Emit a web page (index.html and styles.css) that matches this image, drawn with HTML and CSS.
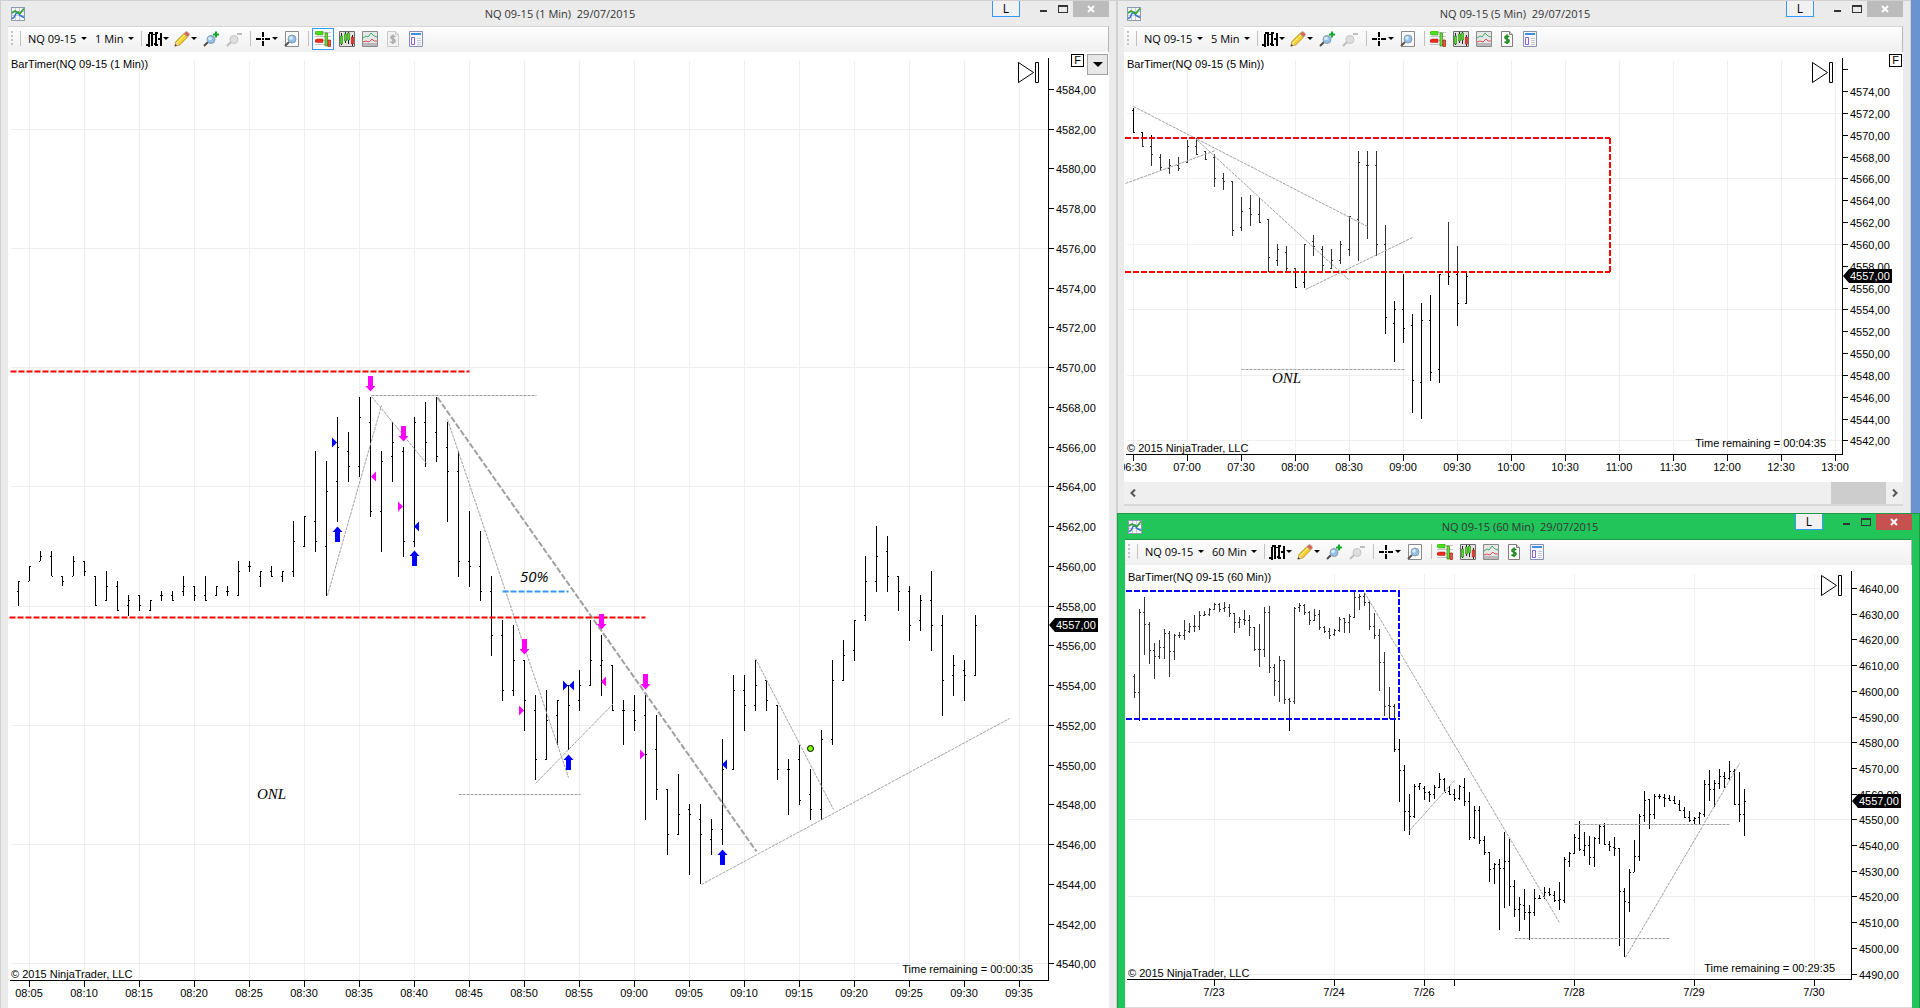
FILE: index.html
```
<!DOCTYPE html>
<html lang="en">
<head>
    <meta charset="UTF-8">
    <meta name="viewport" content="width=device-width, initial-scale=1.0">
    <title>NQ 09-15 Charts</title>
    <link rel="stylesheet" href="styles.css">
</head>
<body>
    <!-- Shared icons -->
    <svg class="sprite" aria-hidden="true">
        <symbol id="i-app" viewBox="0 0 14 14">
            <rect x="0.5" y="0.5" width="13" height="13" fill="#f4f6fa" stroke="#8f9cad"/>
            <path d="M4.5 1v12M8.5 1v12M1 4.5h12M1 8.5h12" stroke="#c3cad6"/>
            <path d="M1 11.5l2-1 2-4 2-1 2 3 4 2" fill="none" stroke="#2f6fd0" stroke-width="1.4"/>
            <path d="M1 6l3-2 3 1.5 2 1L13 1.5" fill="none" stroke="#2fa52f" stroke-width="1.6"/>
        </symbol>
        <symbol id="i-bars" viewBox="0 0 16 16">
            <path d="M2 3h2v13H2zM5 1h2v14H5zM9 1h2v14H9zM14 2h2v13h-2z" fill="#000"/>
            <path d="M0 13h2v2H0zM3 1h2v2H3zM7 3h2v1H7zM8 12h1v2H8zM11 1h1v2h-1zM11 13h1v2h-1zM12 7h2v2h-2z" fill="#000"/>
        </symbol>
        <symbol id="i-pencil" viewBox="0 0 16 16">
            <path d="M1 15l1-4.5L10 2.5l3.500 3.500L5.500 14z" fill="#fbd52e" stroke="#b98a12"/>
            <path d="M3 12l8-8" stroke="#fff09a"/>
            <path d="M1 15l1-4 3 3z" fill="#f1d9b0"/>
            <path d="M0.5 15.5l1-2.500 1.500 1.500z" fill="#333"/>
            <path d="M10 2.500L11.500 1q1-1 2 0l1.500 1.500q1 1 0 2L13.500 6z" fill="#e2604f" stroke="#a8a8a8" stroke-width="0.8"/>
        </symbol>
        <symbol id="i-zoomin" viewBox="0 0 16 16">
            <path d="M1 15l5-5" stroke="#4b4b4b" stroke-width="2"/>
            <circle cx="8" cy="8.5" r="4" fill="#8fc1ea" stroke="#8d9caa"/>
            <circle cx="7" cy="7.5" r="1.8" fill="#d8edfc"/>
            <path d="M13 0.5v6M10 3.5h6" stroke="#12a82c" stroke-width="2"/>
        </symbol>
        <symbol id="i-zoomout" viewBox="0 0 16 16">
            <path d="M1 15l5-5" stroke="#bdbdbd" stroke-width="2"/>
            <circle cx="8" cy="8.5" r="4" fill="#dedede" stroke="#c4c4c4"/>
            <path d="M11 3h5" stroke="#bdbdbd" stroke-width="2"/>
        </symbol>
        <symbol id="i-cross" viewBox="0 0 16 16">
            <path d="M8 1v5M8 10v5M1 8h5M10 8h5" stroke="#000" stroke-width="2"/>
            <path d="M7 7h2v2H7z" fill="#000"/>
        </symbol>
        <symbol id="i-find" viewBox="0 0 16 16">
            <path d="M1.5 0.5h13v15h-13z" fill="#fafafa" stroke="#8a8a8a"/>
            <path d="M1 15l4-4" stroke="#555" stroke-width="2"/>
            <circle cx="8" cy="8" r="4" fill="#8fc1ea" stroke="#8d9caa"/>
            <circle cx="7" cy="7" r="1.8" fill="#d8edfc"/>
        </symbol>
        <symbol id="i-trader" viewBox="0 0 16 16">
            <path d="M0 1.5h16M0 5.5h16M0 9.5h16M0 13.5h16" stroke="#c4c4c4"/>
            <path d="M0 1l2-1h6v4H2L0 3z" fill="#4fe01c" stroke="#2c8a12" stroke-width="0.5"/>
            <path d="M0 9l2-1h6v3.5H2L0 11z" fill="#ee2d20" stroke="#a31a12" stroke-width="0.5"/>
            <path d="M10 2h2.5v13H10z" fill="#6fdc3a" stroke="#2c8a12" stroke-width="0.7"/>
            <path d="M13 9h2.5v6.500H13z" fill="#ee5a4a" stroke="#a31a12" stroke-width="0.7"/>
        </symbol>
        <symbol id="i-candles" viewBox="0 0 16 16">
            <path d="M0.5 0.5h15v15H0.500z" fill="#e2e2e2" stroke="#6d6d6d"/>
            <path d="M2.5 2v12M6.5 1v11M9.5 1v12M13.5 4v11" stroke="#222"/>
            <path d="M1.5 5h2v8h-2zM5.5 3h2v7h-2zM8.5 2h2v7h-2z" fill="#4fe01c" stroke="#1d6b0c" stroke-width="0.5"/>
            <path d="M12.3 6h2.200v7h-2.200z" fill="#ee2d20" stroke="#a31a12" stroke-width="0.5"/>
        </symbol>
        <symbol id="i-lines" viewBox="0 0 16 16">
            <path d="M0.5 0.5h15v15H0.500z" fill="#e6e6e6" stroke="#8a8a8a"/>
            <path d="M1 12h14v3H1z" fill="#b9b9b9"/>
            <path d="M1 7l3-2 2 1 3-4 3 3 3 1" fill="none" stroke="#3fae6a"/>
            <path d="M1 11l3-1 3 1 3-3 2 2 3 0" fill="none" stroke="#e05050"/>
        </symbol>
        <symbol id="i-money" viewBox="0 0 16 16">
            <path d="M2.5 0.5h8l3 3v12h-11z" fill="#fff" stroke="#7d7d7d"/>
            <path d="M10.5 0.5v3h3" fill="#ddd" stroke="#7d7d7d"/>
            <path d="M10.3 5.7Q8 4.3 6.3 5.5Q5 7.3 8 8.2Q11 9 9.7 10.9Q8 12.3 5.5 10.8M8 3.5v9.500" fill="none" stroke="#1c8a1c" stroke-width="1.6"/>
        </symbol>
        <symbol id="i-money-off" viewBox="0 0 16 16">
            <path d="M2.5 0.5h8l3 3v12h-11z" fill="#f1f1f1" stroke="#c9c9c9"/>
            <path d="M10.5 0.5v3h3" fill="#e4e4e4" stroke="#c9c9c9"/>
            <path d="M10.3 5.7Q8 4.3 6.3 5.5Q5 7.3 8 8.2Q11 9 9.7 10.9Q8 12.3 5.5 10.8M8 3.5v9.500" fill="none" stroke="#acacac" stroke-width="1.6"/>
        </symbol>
        <symbol id="i-props" viewBox="0 0 16 16">
            <path d="M1.5 0.5h13v15h-13z" fill="#f7f7ff" stroke="#8791b5"/>
            <path d="M3 2h10v2H3z" fill="#3f8fe0"/>
            <path d="M3.5 6.5h3v7h-3z" fill="#fff" stroke="#8a5fe0"/>
            <path d="M9 7.5h4M9 9.5h4M9 11.5h4M9 13.5h4" stroke="#c5c9d6"/>
        </symbol>
    </svg>

    <main class="desktop">
        <section class="window window-main">
            <header class="titlebar">
                <svg class="app-icon"><use href="#i-app"/></svg>
                <h1 class="title">NQ 09-15 (1 Min)&nbsp; 29/07/2015</h1>
                <div class="controls">
                    <button class="link-btn" type="button">L</button>
                    <button class="ctl" type="button" aria-label="Minimize"><span class="min"></span></button>
                    <button class="ctl" type="button" aria-label="Maximize"><span class="max"></span></button>
                    <button class="close" type="button" aria-label="Close"><svg viewBox="0 0 8 8"><path d="M1 1l6 6M7 1L1 7"/></svg></button>
                </div>
            </header>
            <div class="toolbar">
                <span class="grip"></span>
                <span class="sep"></span>
                <label class="drop"><select aria-label="Instrument"><option>NQ 09-15</option></select></label>
                <label class="drop"><select aria-label="Period"><option>1 Min</option></select></label>
                <span class="sep"></span>
                <button class="tool has-menu" type="button" aria-label="Chart style"><svg><use href="#i-bars"/></svg></button>
                <button class="tool has-menu" type="button" aria-label="Drawing tools"><svg><use href="#i-pencil"/></svg></button>
                <button class="tool" type="button" aria-label="Zoom in"><svg><use href="#i-zoomin"/></svg></button>
                <button class="tool" type="button" aria-label="Zoom out"><svg><use href="#i-zoomout"/></svg></button>
                <span class="sep"></span>
                <button class="tool has-menu" type="button" aria-label="Cross hair"><svg><use href="#i-cross"/></svg></button>
                <button class="tool" type="button" aria-label="Data box"><svg><use href="#i-find"/></svg></button>
                <span class="sep"></span>
                <button class="tool active" type="button" aria-label="Chart trader"><svg><use href="#i-trader"/></svg></button>
                <button class="tool" type="button" aria-label="Data series"><svg><use href="#i-candles"/></svg></button>
                <button class="tool" type="button" aria-label="Indicators"><svg><use href="#i-lines"/></svg></button>
                <button class="tool" type="button" aria-label="Strategies"><svg><use href="#i-money-off"/></svg></button>
                <button class="tool" type="button" aria-label="Properties"><svg><use href="#i-props"/></svg></button>
            </div>
            <div class="chart">
                <svg id="chart1" class="plot"></svg>
                <div class="chart-buttons">
                    <button class="fixed-btn" type="button">F</button>
                    <button class="menu-btn" type="button" aria-label="Chart menu"></button>
                </div>
            </div>
        </section>

        <div class="side">
            <section class="window window-five">
                <header class="titlebar">
                    <svg class="app-icon"><use href="#i-app"/></svg>
                    <h1 class="title">NQ 09-15 (5 Min)&nbsp; 29/07/2015</h1>
                    <div class="controls">
                        <button class="link-btn" type="button">L</button>
                        <button class="ctl" type="button" aria-label="Minimize"><span class="min"></span></button>
                        <button class="ctl" type="button" aria-label="Maximize"><span class="max"></span></button>
                        <button class="close" type="button" aria-label="Close"><svg viewBox="0 0 8 8"><path d="M1 1l6 6M7 1L1 7"/></svg></button>
                    </div>
                </header>
                <div class="toolbar">
                    <span class="grip"></span>
                    <span class="sep"></span>
                    <label class="drop"><select aria-label="Instrument"><option>NQ 09-15</option></select></label>
                    <label class="drop"><select aria-label="Period"><option>5 Min</option></select></label>
                    <span class="sep"></span>
                    <button class="tool has-menu" type="button" aria-label="Chart style"><svg><use href="#i-bars"/></svg></button>
                    <button class="tool has-menu" type="button" aria-label="Drawing tools"><svg><use href="#i-pencil"/></svg></button>
                    <button class="tool" type="button" aria-label="Zoom in"><svg><use href="#i-zoomin"/></svg></button>
                    <button class="tool" type="button" aria-label="Zoom out"><svg><use href="#i-zoomout"/></svg></button>
                    <span class="sep"></span>
                    <button class="tool has-menu" type="button" aria-label="Cross hair"><svg><use href="#i-cross"/></svg></button>
                    <button class="tool" type="button" aria-label="Data box"><svg><use href="#i-find"/></svg></button>
                    <span class="sep"></span>
                    <button class="tool" type="button" aria-label="Chart trader"><svg><use href="#i-trader"/></svg></button>
                    <button class="tool" type="button" aria-label="Data series"><svg><use href="#i-candles"/></svg></button>
                    <button class="tool" type="button" aria-label="Indicators"><svg><use href="#i-lines"/></svg></button>
                    <button class="tool" type="button" aria-label="Strategies"><svg><use href="#i-money"/></svg></button>
                    <button class="tool" type="button" aria-label="Properties"><svg><use href="#i-props"/></svg></button>
                </div>
                <div class="chart">
                    <svg id="chart5" class="plot"></svg>
                    <div class="chart-buttons">
                        <button class="fixed-btn" type="button">F</button>
                    </div>
                </div>
                <div class="scrollbar">
                    <button type="button" aria-label="Scroll left"><svg viewBox="0 0 8 8"><path d="M6 0.5L2.5 4L6 7.5"/></svg></button>
                    <span class="thumb"></span>
                    <button type="button" aria-label="Scroll right"><svg viewBox="0 0 8 8"><path d="M2 0.5L5.5 4L2 7.5"/></svg></button>
                </div>
            </section>

            <section class="window window-hour">
                <header class="titlebar">
                    <svg class="app-icon"><use href="#i-app"/></svg>
                    <h1 class="title">NQ 09-15 (60 Min)&nbsp; 29/07/2015</h1>
                    <div class="controls">
                        <button class="link-btn" type="button">L</button>
                        <button class="ctl" type="button" aria-label="Minimize"><span class="min"></span></button>
                        <button class="ctl" type="button" aria-label="Maximize"><span class="max"></span></button>
                        <button class="close" type="button" aria-label="Close"><svg viewBox="0 0 8 8"><path d="M1 1l6 6M7 1L1 7"/></svg></button>
                    </div>
                </header>
                <div class="toolbar">
                    <span class="grip"></span>
                    <span class="sep"></span>
                    <label class="drop"><select aria-label="Instrument"><option>NQ 09-15</option></select></label>
                    <label class="drop"><select aria-label="Period"><option>60 Min</option></select></label>
                    <span class="sep"></span>
                    <button class="tool has-menu" type="button" aria-label="Chart style"><svg><use href="#i-bars"/></svg></button>
                    <button class="tool has-menu" type="button" aria-label="Drawing tools"><svg><use href="#i-pencil"/></svg></button>
                    <button class="tool" type="button" aria-label="Zoom in"><svg><use href="#i-zoomin"/></svg></button>
                    <button class="tool" type="button" aria-label="Zoom out"><svg><use href="#i-zoomout"/></svg></button>
                    <span class="sep"></span>
                    <button class="tool has-menu" type="button" aria-label="Cross hair"><svg><use href="#i-cross"/></svg></button>
                    <button class="tool" type="button" aria-label="Data box"><svg><use href="#i-find"/></svg></button>
                    <span class="sep"></span>
                    <button class="tool" type="button" aria-label="Chart trader"><svg><use href="#i-trader"/></svg></button>
                    <button class="tool" type="button" aria-label="Data series"><svg><use href="#i-candles"/></svg></button>
                    <button class="tool" type="button" aria-label="Indicators"><svg><use href="#i-lines"/></svg></button>
                    <button class="tool" type="button" aria-label="Strategies"><svg><use href="#i-money"/></svg></button>
                    <button class="tool" type="button" aria-label="Properties"><svg><use href="#i-props"/></svg></button>
                </div>
                <div class="chart">
                    <svg id="chart60" class="plot"></svg>
                </div>
            </section>
        </div>
    </main>

    <script src="charts.js"></script>
</body>
</html>
```
FILE: styles.css
```
* {
    box-sizing: border-box;
}

body {
    margin: 0;
    height: 100vh;
    overflow: hidden;
    background: #6b93d0;
    color: #000;
    font: 11px/14px "Liberation Sans", Arial, sans-serif;
}

button, select {
    margin: 0;
    padding: 0;
    border: 0;
    background: none;
    color: inherit;
    font: inherit;
}

.sprite {
    position: absolute;
    width: 0;
    height: 0;
}

/* Desktop: one tall window on the left, two stacked on the right */
.desktop {
    display: grid;
    grid-template-columns: 1117fr 803fr;
    height: 100%;
}

.side {
    display: grid;
    grid-template-rows: 513fr 495fr;
    min-width: 0;
    min-height: 0;
}

.window {
    display: flex;
    flex-direction: column;
    min-width: 0;
    min-height: 0;
    padding: 0 7px;
    background: #ebebeb;
    border: 1px solid #d0d0d0;
    border-bottom: 0;
}

.window-five {
    margin-right: 9px;
    padding: 0 7px 7px 6px;
}

.window-hour {
    background: #22c55a;
    border-color: #1d9a48;
}

/* Title bar */
.titlebar {
    display: flex;
    align-items: center;
    flex: none;
    height: 25px;
    padding-left: 3px;
}

.app-icon {
    flex: none;
    width: 14px;
    height: 14px;
}

.title {
    flex: 1;
    margin: 0;
    padding-left: 103px;
    color: #333;
    font: 11px/14px "Open Sans", "Noto Sans", sans-serif;
    text-align: center;
}

.controls {
    display: flex;
    align-self: flex-start;
    height: 16px;
}

.link-btn {
    width: 28px;
    margin-right: 13px;
    background: #f1f1f1;
    border: 1px solid #3399ff;
    border-top: 0;
    font: 12px/14px "Open Sans", sans-serif;
}

.ctl {
    display: flex;
    align-items: center;
    justify-content: center;
    width: 20px;
    height: 16px;
}

.min {
    width: 7px;
    height: 2px;
    margin-top: 4px;
    background: #333;
}

.max {
    width: 10px;
    height: 8px;
    border: 1px solid #333;
    border-top-width: 2px;
}

.close {
    width: 36px;
    background: #bcbcbc;
}

.close svg {
    width: 8px;
    height: 8px;
    stroke: #fff;
    stroke-width: 2;
}

.window-hour .close {
    background: #c75050;
}

/* Toolbar */
.toolbar {
    display: flex;
    align-items: center;
    flex: none;
    height: 26px;
    padding: 0 0 2px 3px;
    background: linear-gradient(#fdfdfd, #f0f0f0);
    border-top: 1px solid #d6d6d6;
    border-right: 1px solid #b5b5b5;
}

.window-hour .toolbar {
    border-top-color: #1d9a48;
}

.grip {
    width: 2px;
    height: 15px;
    margin-right: 7px;
    background: repeating-linear-gradient(#c4c4c4 0 2px, transparent 2px 4px);
}

.sep {
    width: 1px;
    height: 15px;
    margin-right: 3px;
    background: #c0c0c0;
}

.drop, .has-menu {
    display: flex;
    align-items: center;
}

.drop {
    padding: 0 4px;
}

.drop + .sep {
    margin-left: 3px;
}

.drop select {
    appearance: none;
    font: 11px/14px "Open Sans", "Noto Sans", sans-serif;
}

.drop::after, .has-menu::after {
    content: "";
    border: 3px solid transparent;
    border-top-color: #000;
    border-bottom: 0;
}

.drop::after {
    margin-left: 4px;
}

.tool {
    height: 22px;
    padding: 0 2px;
    margin-right: 3px;
}

.tool svg {
    display: block;
    width: 16px;
    height: 16px;
}

.has-menu {
    padding: 0 1px;
}

.has-menu::after {
    margin-left: 1px;
}

.tool + .sep {
    margin-left: 3px;
}

.active {
    border: 1px solid #3399ff;
    background: #fff;
}

/* Chart area */
.chart {
    position: relative;
    flex: 1;
    min-height: 0;
    background: #fff;
}

.window-hour .chart {
    border-bottom: 1px solid #dcdcdc;
}

.plot {
    display: block;
    width: 100%;
    height: 100%;
}

.chart-buttons {
    position: absolute;
    top: 2px;
    right: 1px;
    display: flex;
    align-items: flex-start;
    gap: 3px;
}

.fixed-btn {
    width: 13px;
    height: 13px;
    border: 1px solid #000;
    background: #fff;
    line-height: 11px;
}

.menu-btn {
    display: flex;
    align-items: center;
    justify-content: center;
    width: 21px;
    height: 21px;
    border: 1px solid #a0a0a0;
    background: #e8e8e8;
}

.menu-btn::after {
    content: "";
    border: 5px solid transparent;
    border-top-color: #000;
    border-bottom: 0;
}

.scrollbar {
    display: flex;
    flex: none;
    height: 24px;
    background: #efefef;
    border-bottom: 2px solid #d8d8d8;
}

.scrollbar button {
    width: 17px;
}

.scrollbar svg {
    width: 8px;
    height: 8px;
    fill: none;
    stroke: #555;
    stroke-width: 2;
}

.thumb {
    width: 55px;
    margin-left: auto;
    background: #cdcdcd;
}

/* Chart drawing */
.grid {
    stroke: #efefef;
}

.axis, .tick {
    stroke: #000;
}

.grid, .axis, .tick, .bar {
    shape-rendering: crispEdges;
}

.bar {
    fill: #000;
}

.trend {
    stroke: #a0a0a0;
    stroke-dasharray: 3 1;
    fill: none;
}

.trend-strong {
    stroke: #a0a0a0;
    stroke-width: 2;
    stroke-dasharray: 6 2;
}

.level {
    stroke-width: 2;
    stroke-dasharray: 6 2;
}

.red { stroke: #f00; }
.blue { stroke: #00f; }
.sky { stroke: #39f; }

.zone {
    fill: #fff;
    opacity: 0.2;
}

.buy { fill: #00f; }
.sell { fill: #f0f; }

.dot {
    fill: #80ff00;
    stroke: #000;
}

.skip {
    fill: #fff;
    stroke: #000;
}

.plot text {
    font: 11px "Liberation Sans", Arial, sans-serif;
}

.plot .note-serif {
    font: italic 15px "Liberation Serif", serif;
}

.plot .note-sans {
    font: italic 15px "Open Sans", sans-serif;
}

.plot .last {
    fill: #fff;
}
```
FILE: charts.js
```
// Bars are "high low open close", one per slot; all positions are in desktop
// units, x is kept to the right edge and y is scaled to the height of the plot.

const bars1 = `581 606 591 581,566 581 581 566,551 561 561 556,551 576 556 576,576 586 576 581,556 576 576 561,
561 576 561 571,576 606 576 605,571 601 600 586,581 611 586 610,595 616 605 600,595 611 595 605,600 611 610 600,
591 601 595 595,591 601 595 600,576 596 591 586,586 601 586 595,576 601 595 600,586 596 595 586,586 596 591 591,
561 596 595 571,561 572 566 566,571 587 576 571,566 577 571 576,571 582 576 571,521 577 571 541,516 547 546 516,
451 552 521 541,461 596 546 491,417 522 481 447,432 482 451 466,397 477 466 417,397 517 422 511,451 552 511 461,
422 482 456 442,447 557 451 541,417 547 541 422,402 467 422 442,397 462 432 456,422 522 447 471,451 577 471 561,
511 587 561 566,531 601 566 591,576 656 591 635,620 701 635 690,625 696 690 660,660 731 660 700,695 780 710 759,
690 760 759 720,700 745 715 700,685 750 685 705,670 711 700 685,620 686 685 660,635 696 665 660,665 711 665 710,
700 745 710 710,695 731 710 720,695 820 715 754,715 800 749 789,789 855 789 834,774 835 834 814,804 875 809 814,
804 884 819 834,819 855 839 829,739 845 829 769,675 770 769 690,675 731 690 705,660 711 705 685,680 711 680 700,
705 780 705 769,759 815 769 769,745 805 759 800,769 820 794 809,730 820 809 739,660 745 739 680,640 681 680 655,
620 661 650 620,556 621 615 581,526 592 581 556,536 592 551 576,576 611 576 591,586 641 591 625,595 631 620 600,
571 651 600 625,615 716 625 680,655 696 675 665,660 701 670 675,615 676 675 625`;

const bars5 = `108 133 110 132,132 147 132 146,135 166 146 154,154 171 157 167,159 174 168 165,157 171 165 168,
140 163 162 146,138 155 146 154,151 160 151 159,154 187 157 178,173 190 178 181,181 236 181 230,197 231 227 211,
195 226 208 214,197 223 214 222,219 272 219 257,244 266 260 249,246 272 252 268,268 288 268 287,244 288 282 244,
235 256 241 246,246 272 249 265,249 269 268 260,241 264 260 244,216 256 249 216,151 261 219 162,151 239 165 165,
151 256 165 244,225 334 244 317,301 362 323 309,274 343 309 328,314 413 325 380,303 419 382 320,295 381 320 372,
274 383 369 274,222 285 271 276,246 326 274 303,272 304 303 276`;

const bars60 = `674 698 676 692,609 721 692 612,597 655 612 624,622 664 624 650,643 679 650 656,640 659 656 647,
629 659 647 633,631 677 633 651,634 660 651 635,632 638 635 635,620 640 635 630,623 633 631 626,615 632 626 626,
611 630 626 615,611 616 615 614,608 616 614 609,603 610 609 604,603 612 604 609,602 612 608 607,604 617 607 613,
613 633 613 622,617 628 622 619,610 625 619 620,615 636 620 627,627 651 627 649,624 667 649 649,607 657 649 612,
606 673 612 667,664 696 667 680,656 702 681 660,660 704 660 699,698 731 699 701,607 704 701 608,603 612 607 605,
604 615 605 612,611 625 612 620,609 621 620 615,610 630 614 627,626 633 627 631,628 639 631 635,629 636 634 630,
617 632 630 619,618 633 618 622,614 633 622 616,591 618 617 597,594 610 597 596,593 606 596 602,601 630 602 626,
613 639 626 635,629 691 635 662,652 716 662 706,687 719 705 706,704 752 706 749,739 802 749 770,765 831 770 811,
794 835 811 816,784 818 816 786,783 790 786 783,786 800 788 792,791 802 792 794,785 799 794 787,773 788 787 779,
778 792 779 792,786 795 791 794,789 801 794 798,785 800 798 786,778 806 787 801,792 840 801 837,806 839 837 810,
806 844 810 840,836 855 840 852,852 882 852 869,863 884 868 864,859 930 864 868,832 908 868 861,839 906 861 886,
880 917 886 909,897 931 909 904,889 920 905 912,905 940 912 912,889 916 912 898,895 899 898 898,887 899 896 892,
888 896 892 894,891 902 895 900,882 910 900 899,857 903 900 859,852 867 861 853,834 854 853 837,821 851 838 849,
832 856 850 845,836 865 845 857,837 867 857 838,825 844 838 826,823 845 826 844,841 851 844 846,837 856 847 848,
848 946 848 891,888 957 891 901,869 912 902 872,840 872 872 856,814 861 856 816,791 822 815 800,799 829 799 814,
794 819 814 796,794 799 796 796,794 807 797 798,795 801 798 800,796 804 800 803,800 811 804 810,807 818 810 817,
811 822 817 820,817 824 820 818,812 825 817 813,780 817 814 784,770 801 784 789,780 807 789 783,769 789 783 776,
772 788 776 778,761 781 778 771,769 805 771 804,772 822 804 814,789 836 814 801`;

const charts = [
    {
        id: 'chart1', area: [8, 52, 1101, 956], name: 'BarTimer(NQ 09-15 (1 Min))',
        bars: bars1, first: 18, step: 11,
        axisX: 1048, axisY: 980, top: 57,
        price: { from: 4584, to: 4540, by: 2, y: 89, unit: 19.87, grid: 6, gridFrom: 4582 },
        times: timeLabels(8 * 60 + 5, 19, 5).map((t, i) => [29 + i * 55, t]),
        last: 625, skip: [1018, 62],
        remaining: ['Time remaining = 00:00:35', 1033, 973],
        copyright: 978,
        // soft levels are centred on a pixel row
        soft: true,
        levels: [['red', 10, 371, 469, 371], ['red', 9, 617, 645, 617], ['sky', 502, 591, 568, 591]],
        trends: [[371, 395, 536, 395], [458, 794, 580, 794], [327, 595, 381, 405], [371, 396, 426, 463],
            [447, 419, 568, 777], [535, 783, 613, 703], [755, 658, 833, 809], [701, 884, 1009, 718]],
        strong: [[437, 397, 756, 851]],
        down: [[370, 376], [403, 426], [524, 639], [601, 614], [645, 674]],
        up: [[337, 527], [414, 551], [568, 755], [722, 850]],
        // tip x, tip y, side the triangle lies on, kind
        tips: [[337, 442, -1, 'buy'], [371, 476, 1, 'sell'], [403, 506, -1, 'sell'], [414, 526, 1, 'buy'],
            [524, 710, -1, 'sell'], [568, 685, -1, 'buy'], [569, 685, 1, 'buy'], [601, 681, 1, 'sell'],
            [645, 754, -1, 'sell'], [722, 764, 1, 'buy']],
        dots: [[810, 748]],
        notes: [['note-sans', '50%', 520, 582], ['note-serif', 'ONL', 257, 799]]
    },
    {
        id: 'chart5', area: [1124, 52, 779, 430], name: 'BarTimer(NQ 09-15 (5 Min))',
        bars: bars5, first: 1133, step: 9,
        axisX: 1842, axisY: 454, top: 57,
        price: { from: 4574, to: 4542, by: 2, y: 91, unit: 10.92, grid: 6, gridFrom: 4572, bare: [4576] },
        times: timeLabels(6 * 60 + 30, 14, 30).map((t, i) => [1133 + i * 54, t]),
        last: 276, skip: [1812, 62],
        remaining: ['Time remaining = 00:04:35', 1826, 447],
        copyright: 452,
        zone: [1125, 138, 1610, 272],
        levels: [['red', 1125, 138, 1610, 138], ['red', 1125, 272, 1610, 272], ['red', 1610, 138, 1610, 272]],
        trends: [[1133, 106, 1367, 226], [1125, 183, 1215, 150], [1196, 139, 1349, 280], [1305, 289, 1412, 237],
            [1241, 369, 1404, 369]],
        notes: [['note-serif', 'ONL', 1272, 383]]
    },
    {
        id: 'chart60', area: [1125, 565, 787, 442], name: 'BarTimer(NQ 09-15 (60 Min))',
        bars: bars60, first: 1134, step: 5,
        axisX: 1851, axisY: 979, top: 570,
        price: { from: 4640, to: 4490, by: 10, y: 588, unit: 2.57, grid: 30, gridFrom: 4640 },
        times: [[1214, '7/23'], [1334, '7/24'], [1424, '7/26'], [1454, ''], [1574, '7/28'], [1694, '7/29'], [1814, '7/30']],
        last: 801, skip: [1821, 575],
        remaining: ['Time remaining = 00:29:35', 1835, 972],
        copyright: 977,
        zone: [1126, 591, 1399, 719],
        levels: [['blue', 1126, 591, 1400, 591], ['blue', 1126, 719, 1400, 719], ['blue', 1399, 591, 1399, 719]],
        trends: [[1364, 592, 1559, 922], [1409, 830, 1454, 780], [1574, 824, 1730, 824], [1514, 938, 1670, 938],
            [1625, 957, 1739, 763]]
    }
];

function timeLabels(start, count, by) {
    const list = [];
    for (let i = 0; i < count; i++) {
        const t = start + i * by;
        list.push(String(Math.floor(t / 60)).padStart(2, '0') + ':' + String(t % 60).padStart(2, '0'));
    }
    return list;
}

function draw(c) {
    const svg = document.getElementById(c.id);
    const box = svg.getBoundingClientRect();
    const [ax, ay, aw, ah] = c.area;
    const X = x => Math.round(x - ax + box.width - aw);
    const Y = y => Math.round((y - ay) * box.height / ah);
    const out = [];

    // 1px strokes sit on half pixels, 2px strokes on whole ones
    const line = (cls, x1, y1, x2, y2, o = 0.5) =>
        out.push(`<line class="${cls}" x1="${x1 + o}" y1="${y1 + o}" x2="${x2 + o}" y2="${y2 + o}"/>`);
    const text = (cls, s, x, y, anchor = 'start') =>
        out.push(`<text class="${cls}" x="${x}" y="${y}" text-anchor="${anchor}">${s}</text>`);
    const left = 2;

    const priceY = p => Y(c.price.y + (c.price.from - p) * c.price.unit);

    // Grid
    c.times.forEach(([x]) => line('grid', X(x), 8, X(x), Y(c.axisY)));
    for (let p = c.price.gridFrom; p >= c.price.to; p -= c.price.grid) {
        line('grid', left, priceY(p), X(c.axisX), priceY(p));
    }

    // Bars
    c.bars.split(',').forEach((row, i) => {
        const [h, l, o, cl] = row.trim().split(' ').map(Number);
        const x = X(c.first + i * c.step);
        out.push(`<path class="bar" d="M${x} ${Y(h)}h1V${Y(l)}h-1zM${x - 1} ${Y(o)}h1v1h-1zM${x + 1} ${Y(cl)}h1v1h-1z"/>`);
    });

    if (c.zone) {
        const [x1, y1, x2, y2] = c.zone;
        out.push(`<rect class="zone" x="${left}" y="${Y(y1)}" width="${X(x2) - left}" height="${Y(y2) - Y(y1)}"/>`);
    }

    // Drawing objects
    c.trends.forEach(([x1, y1, x2, y2]) => line('trend', X(x1), Y(y1), X(x2), Y(y2)));
    (c.strong || []).forEach(([x1, y1, x2, y2]) => line('trend-strong', X(x1), Y(y1), X(x2), Y(y2)));
    c.levels.forEach(([color, x1, y1, x2, y2]) =>
        line('level ' + color, X(x1), Y(y1), X(x2), Y(y2), c.soft ? 0.5 : 0));
    (c.down || []).forEach(([x, y]) =>
        out.push(`<path class="sell" d="M${X(x) - 2} ${Y(y)}h5v10h2.5l-5 5.5l-5-5.5h2.5z"/>`));
    (c.up || []).forEach(([x, y]) =>
        out.push(`<path class="buy" d="M${X(x) - 2} ${Y(y) + 15}h5v-10h2.5l-5-5.5l-5 5.5h2.5z"/>`));
    (c.tips || []).forEach(([x, y, side, kind]) =>
        out.push(`<path class="${kind}" d="M${X(x)} ${Y(y) + 0.5}l${side * 5}-5v10z"/>`));
    (c.dots || []).forEach(([x, y]) => out.push(`<circle class="dot" cx="${X(x) + 0.5}" cy="${Y(y) + 0.5}" r="3"/>`));
    (c.notes || []).forEach(([cls, s, x, y]) => text(cls, s, X(x), Y(y)));

    // Axes
    line('axis', X(c.axisX), Y(c.top), X(c.axisX), Y(c.axisY));
    line('axis', 1, Y(c.axisY), X(c.axisX), Y(c.axisY));
    (c.price.bare || []).forEach(p => line('tick', X(c.axisX), priceY(p), X(c.axisX) + 5, priceY(p)));
    for (let p = c.price.from; p >= c.price.to; p -= c.price.by) {
        line('tick', X(c.axisX), priceY(p), X(c.axisX) + 5, priceY(p));
        text('', p + ',00', X(c.axisX) + 8, priceY(p) + 5);
    }
    c.times.forEach(([x, label]) => {
        line('tick', X(x), Y(c.axisY), X(x), Y(c.axisY) + 6);
        if (label) {
            text('', label, X(x), Y(c.axisY) + 17, 'middle');
        }
    });

    // Last price marker
    const mx = X(c.axisX) + 1;
    const my = Y(c.last);
    out.push(`<path d="M${mx} ${my}l6-7h43v14h-43z"/>`);
    text('last', '4557,00', mx + 7, my + 4);

    // Go to last bar
    const sx = X(c.skip[0]) + 0.5;
    const sy = Y(c.skip[1]) + 0.5;
    out.push(`<path class="skip" d="M${sx} ${sy}v20l15-10zM${sx + 17} ${sy}h3v20h-3z"/>`);

    text('', c.name, 3, 16);
    text('', c.remaining[0], X(c.remaining[1]), Y(c.remaining[2]), 'end');
    text('', '© 2015 NinjaTrader, LLC', 3, Y(c.copyright));

    svg.innerHTML = out.join('');
}

function drawAll() {
    charts.forEach(draw);
}

window.addEventListener('resize', drawAll);
drawAll();
```
